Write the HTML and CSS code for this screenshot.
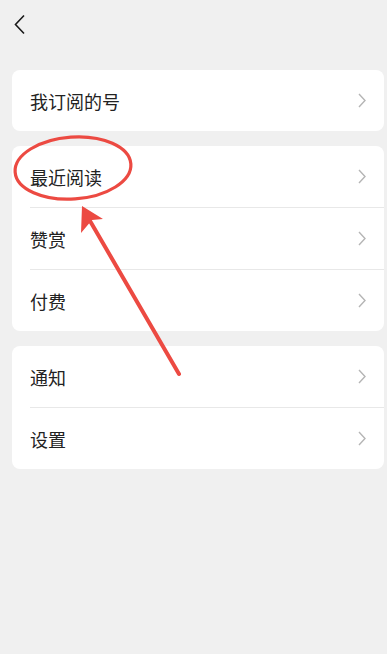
FILE: index.html
```html
<!DOCTYPE html>
<html lang="zh-CN">
<head>
    <meta charset="UTF-8">
    <meta name="viewport" content="width=device-width, initial-scale=1.0">
    <title>订阅号设置</title>
    <link rel="stylesheet" href="styles.css">
</head>
<body>
    <div class="page">
        <div class="header">
            <svg class="back" width="12" height="22" viewBox="0 0 12 22">
                <polyline points="10,1.5 1.5,10.5 10,19.5" fill="none" stroke="#1a1a1a" stroke-width="1.6"/>
            </svg>
        </div>

        <div class="card">
            <div class="row"><span>我订阅的号</span><svg class="arrow" width="8" height="15" viewBox="0 0 8 15"><polyline points="1,1 7,7.5 1,14" fill="none" stroke="#b5b5b5" stroke-width="1.4"/></svg></div>
        </div>

        <div class="card">
            <div class="row"><span>最近阅读</span><svg class="arrow" width="8" height="15" viewBox="0 0 8 15"><polyline points="1,1 7,7.5 1,14" fill="none" stroke="#b5b5b5" stroke-width="1.4"/></svg></div>
            <div class="row"><span>赞赏</span><svg class="arrow" width="8" height="15" viewBox="0 0 8 15"><polyline points="1,1 7,7.5 1,14" fill="none" stroke="#b5b5b5" stroke-width="1.4"/></svg></div>
            <div class="row"><span>付费</span><svg class="arrow" width="8" height="15" viewBox="0 0 8 15"><polyline points="1,1 7,7.5 1,14" fill="none" stroke="#b5b5b5" stroke-width="1.4"/></svg></div>
        </div>

        <div class="card">
            <div class="row"><span>通知</span><svg class="arrow" width="8" height="15" viewBox="0 0 8 15"><polyline points="1,1 7,7.5 1,14" fill="none" stroke="#b5b5b5" stroke-width="1.4"/></svg></div>
            <div class="row"><span>设置</span><svg class="arrow" width="8" height="15" viewBox="0 0 8 15"><polyline points="1,1 7,7.5 1,14" fill="none" stroke="#b5b5b5" stroke-width="1.4"/></svg></div>
        </div>

        <!-- red annotation drawn over the screenshot -->
        <svg class="mark" width="387" height="654" viewBox="0 0 387 654">
            <ellipse cx="73" cy="168" rx="58" ry="31" transform="rotate(-4 73 168)" fill="none" stroke="#ec4a42" stroke-width="3.2"/>
            <line x1="179" y1="374" x2="86" y2="214" stroke="#ec4a42" stroke-width="4" stroke-linecap="round"/>
            <polygon points="82,206 103,219 92,220 81,233" fill="#ec4a42"/>
        </svg>
    </div>
</body>
</html>
```

FILE: styles.css
```css
body {
    margin: 0;
    background-color: #f0f0f0;
    font-family: "Noto Sans CJK SC", "Noto Sans", sans-serif;
}
.page {
    position: relative;
    width: 387px;
    height: 654px;
    overflow: hidden;
}
.header {
    height: 50px;
    padding-left: 14px;
    display: flex;
    align-items: center;
    margin-bottom: 20px;
}
.back {
    display: block;
}
.card {
    background-color: white;
    border-radius: 8px;
    margin: 0 3px 15px 12px;
    padding-left: 18px;
}
.row {
    height: 61px;
    display: flex;
    align-items: center;
    justify-content: space-between;
    padding-right: 18px;
    border-bottom: 1px solid #e8e8e8;
    font-size: 18px;
    color: #222;
}
.row:last-child {
    border-bottom: none;
}
.arrow {
    display: block;
}
.mark {
    position: absolute;
    left: 0;
    top: 0;
}
```
